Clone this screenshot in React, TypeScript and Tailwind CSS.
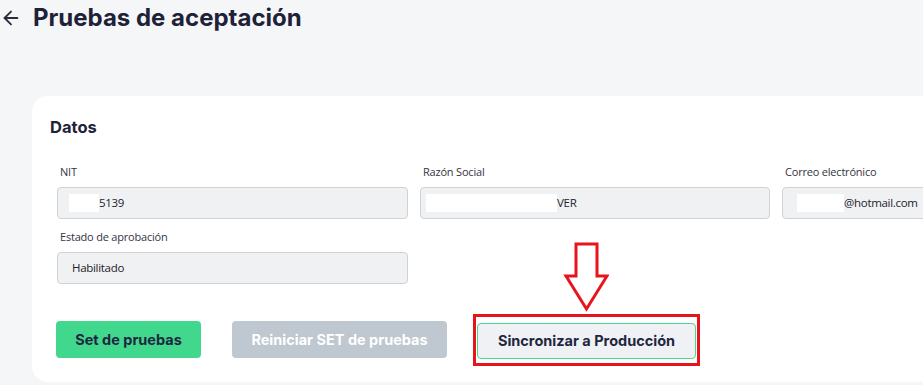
import { ArrowLeft } from "lucide-react";

const labelCls = "text-[11px] tracking-[-0.2px] leading-none text-[#34343f] pl-[3px]";
const inputCls =
  "h-[32px] rounded-[4px] border border-[#cfd2d6] bg-[#f0f1f3] flex items-center pl-[14px] text-[11.5px] tracking-[-0.3px] text-[#22222c]";

function Field({
  label,
  children,
  width,
}: {
  label: string;
  children: React.ReactNode;
  width: string;
}) {
  return (
    <div className={`flex shrink-0 flex-col gap-[10px] ${width}`}>
      <span className={labelCls}>{label}</span>
      <div className={inputCls}>{children}</div>
    </div>
  );
}

// tapado blanco como en la captura
function Mask({ w }: { w: string }) {
  return <span className={`inline-block h-[18px] bg-white ${w}`} />;
}

export default function App() {
  return (
    <div
      className="h-[385px] w-[923px] overflow-hidden bg-[#f5f6f8] text-[#1e2238]"
      style={{ fontFamily: "'Open Sans', 'Noto Sans', sans-serif" }}
    >
      <header className="flex h-[36px] items-center gap-[11px] pl-[0px]">
        <ArrowLeft size={22} strokeWidth={2} className="text-[#2a2d3d]" />
        <h1 className="font-['Inter',sans-serif] text-[24px] font-bold tracking-[0px] text-[#1e2238]">
          Pruebas de aceptación
        </h1>
      </header>

      <section className="ml-[32px] mt-[60px] w-[1100px] rounded-[16px] bg-white px-[18px] pb-[16px] pt-[19px]">
        <h2 className="font-['Inter',sans-serif] text-[16.5px] font-bold text-[#1e2238]">Datos</h2>

        <div className="ml-[7px] mt-[26px] flex flex-col gap-[12px]">
          <div className="flex gap-[12px]">
            <Field label="NIT" width="w-[351px]">
              <Mask w="w-[30px] -ml-[3px]" />
              <span>5139</span>
            </Field>
            <Field label="Razón Social" width="w-[350px]">
              <Mask w="w-[131px] -ml-[9px]" />
              <span>VER</span>
            </Field>
            <Field label="Correo electrónico" width="w-[351px]">
              <Mask w="w-[47px]" />
              <span>@hotmail.com</span>
            </Field>
          </div>
          <Field label="Estado de aprobación" width="w-[351px]">
            <span>Habilitado</span>
          </Field>
        </div>

        <div className="ml-[6px] mt-[30px] flex items-center font-['Inter',sans-serif] text-[14.5px] font-bold">
          <button className="h-[37px] w-[145px] rounded-[4px] bg-[#41d88d] text-[#1e2640]">
            Set de pruebas
          </button>
          <button className="ml-[31px] h-[37px] w-[215px] rounded-[4px] bg-[#bfc7d1] text-white">
            Reiniciar SET de pruebas
          </button>
          <div className="relative ml-[26px]">
            <div className="border-[3px] border-[#e8141c] px-[1px] pb-[4px] pt-[6px]">
              <button className="h-[36px] w-[219px] rounded-[4px] border border-[#48d98f] bg-[#eff1f4] text-[#1e2640]">
                Sincronizar a Producción
              </button>
            </div>
            <svg
              className="absolute left-[90px] top-[-72px]"
              width="46"
              height="70"
              viewBox="0 0 46 70"
            >
              <path
                d="M13 2 H34 V34 H44 L23.5 67 L3 34 H13 Z"
                fill="white"
                stroke="#e8141c"
                strokeWidth="3"
              />
            </svg>
          </div>
        </div>
      </section>
    </div>
  );
}
